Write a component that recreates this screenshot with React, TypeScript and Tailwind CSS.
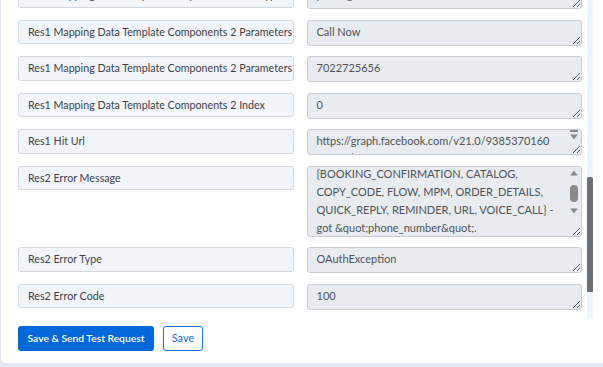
import { useLayoutEffect, useRef } from "react";

type Row = { label: string; value: string; kind?: "url" | "msg" };

const rows: Row[] = [
  { label: "Res1 Mapping Data Template Components 2 Sub Type", value: "phone_number" },
  { label: "Res1 Mapping Data Template Components 2 Parameters", value: "Call Now" },
  { label: "Res1 Mapping Data Template Components 2 Parameters", value: "7022725656" },
  { label: "Res1 Mapping Data Template Components 2 Index", value: "0" },
  { label: "Res1 Hit Url", value: "https://graph.facebook.com/v21.0/9385370160\n88093/messages", kind: "url" },
  {
    label: "Res2 Error Message",
    value:
      "{BOOKING_CONFIRMATION, CATALOG,\nCOPY_CODE, FLOW, MPM, ORDER_DETAILS,\nQUICK_REPLY, REMINDER, URL, VOICE_CALL} -\ngot &quot;phone_number&quot;.",
    kind: "msg",
  },
  { label: "Res2 Error Type", value: "OAuthException" },
  { label: "Res2 Error Code", value: "100" },
  { label: "Res2 Error Subcode", value: "2494010" },
  { label: "Res2 Fbtrace Id", value: "AbC1x9QeR2mTz7" },
];

function UpArrow() {
  return (
    <svg width="8" height="6" viewBox="0 0 8 6">
      <path d="M4 0.5 L7.8 5.5 L0.2 5.5 Z" fill="#8a8a8a" />
    </svg>
  );
}

function DownArrow() {
  return (
    <svg width="8" height="6" viewBox="0 0 8 6">
      <path d="M0.2 0.5 L7.8 0.5 L4 5.5 Z" fill="#8a8a8a" />
    </svg>
  );
}

export default function App() {
  const listRef = useRef<HTMLDivElement>(null);
  const msgRef = useRef<HTMLTextAreaElement>(null);

  useLayoutEffect(() => {
    if (listRef.current) listRef.current.scrollTop = 16.5;
    if (msgRef.current) msgRef.current.scrollTop = 4;
  }, []);

  return (
    <div className="h-[367px] w-[603px] overflow-hidden bg-[#dfe7f3] pl-px font-['Lato',sans-serif]">
      <div className="flex h-[363px] flex-col rounded-bl-[5px] bg-white">
        <div className="mr-[10px] flex h-[319px]">
          <div ref={listRef} className="flex-1 overflow-hidden pl-[17px] pr-[5px]">
            <div className="grid grid-cols-2 gap-x-[13px] gap-y-[10.5px] pb-[10.5px]">
              {rows.map((row, i) => (
                <div key={i} className="contents">
                  <div className="flex h-[24.5px] items-center overflow-hidden whitespace-nowrap rounded-[3px] border border-[#d5dae0] bg-[#f2f5f9] px-[9px] text-[10.7px] text-[#3d4249]">
                    {row.label}
                  </div>
                  <div className="relative">
                    <textarea
                      ref={row.kind === "msg" ? msgRef : undefined}
                      readOnly
                      value={row.value}
                      className={`block w-full resize-y overflow-hidden whitespace-pre rounded-[3px] border border-[#c9ced4] bg-[#e8ebef] pl-[9px] pt-[2px] text-[11px] text-[#4f5459] outline-none ${
                        row.kind === "msg"
                          ? "h-[71px] pr-[20px] leading-[18px]"
                          : row.kind === "url"
                            ? "h-[26px] pr-[20px] leading-[17px]"
                            : "h-[26px] pr-[9px] leading-[18px]"
                      }`}
                    />
                    {row.kind === "url" && (
                      <div className="absolute right-[4px] top-[1px] flex flex-col items-center gap-[2px]">
                        <div className="h-[2px] w-[8px] bg-[#8a8a8a]" />
                        <DownArrow />
                      </div>
                    )}
                    {row.kind === "msg" && (
                      <div className="absolute right-[4px] top-[4px] flex flex-col items-center">
                        <UpArrow />
                        <div className="mt-[9px] h-[17px] w-[8px] rounded-full bg-[#8a8a8a]" />
                        <div className="mt-[6px]">
                          <DownArrow />
                        </div>
                      </div>
                    )}
                  </div>
                </div>
              ))}
            </div>
          </div>
          <div className="w-[6px] bg-[#edf4fd]">
            <div className="mt-[177px] h-[115px] rounded-t-[2px] bg-[#6c7177]" />
          </div>
        </div>

        <div className="flex gap-[9px] pl-[17px] pt-[7px]">
          <button className="h-[25px] w-[136px] rounded-[3px] bg-[#0068d9] text-[10.3px] font-semibold text-white">
            Save &amp; Send Test Request
          </button>
          <button className="h-[25px] w-[40px] rounded-[3px] border border-[#1a6fe0] bg-white text-[11px] text-[#1669d6]">
            Save
          </button>
        </div>
      </div>
    </div>
  );
}
